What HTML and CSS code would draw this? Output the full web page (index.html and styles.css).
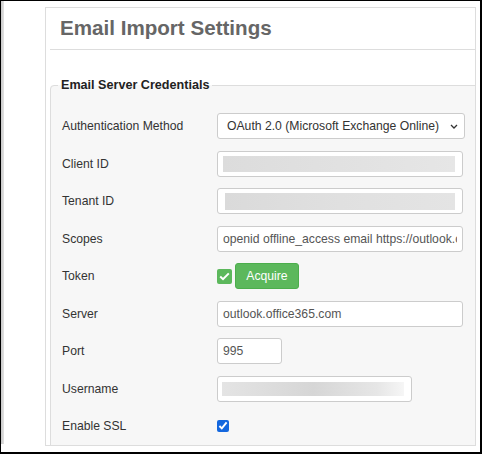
FILE: index.html
```html
<!DOCTYPE html>
<html>
<head>
    <meta charset="utf-8">
    <title>Email Import Settings</title>
    <link rel="stylesheet" href="styles.css">
</head>
<body>
    <div class="frame">
        <div class="edge"></div>

        <div class="panel">
            <div class="panel-head">
                <h2>Email Import Settings</h2>
            </div>

            <fieldset class="creds">
                <legend>Email Server Credentials</legend>

                <div class="form">
                    <label>Authentication Method</label>
                    <div class="field select">
                        <span>OAuth 2.0 (Microsoft Exchange Online)</span>
                        <svg width="8" height="5" viewBox="0 0 8 5">
                            <path d="M1 1 L4 4 L7 1" fill="none" stroke="#333" stroke-width="1.3"/>
                        </svg>
                    </div>

                    <label>Client ID</label>
                    <div class="field wide">
                        <span class="redact r1"></span>
                    </div>

                    <label>Tenant ID</label>
                    <div class="field wide">
                        <span class="redact r2"></span>
                    </div>

                    <label>Scopes</label>
                    <input class="field wide" type="text" value="openid offline_access email https://outlook.office.com/IMAP.AccessAsUser.All">

                    <label>Token</label>
                    <div class="token">
                        <span class="ok">
                            <svg width="11" height="9" viewBox="0 0 11 9">
                                <path d="M1.2 4.6 L4 7.2 L9.8 1.4" fill="none" stroke="#fff" stroke-width="2"/>
                            </svg>
                        </span>
                        <button class="btn">Acquire</button>
                    </div>

                    <label>Server</label>
                    <input class="field wide" type="text" value="outlook.office365.com">

                    <label>Port</label>
                    <input class="field port" type="text" value="995">

                    <label>Username</label>
                    <div class="field user">
                        <span class="redact r3"></span>
                    </div>

                    <label>Enable SSL</label>
                    <div class="ssl">
                        <input type="checkbox" checked>
                    </div>
                </div>
            </fieldset>
        </div>
    </div>
</body>
</html>
```

FILE: styles.css
```css
* {
    margin: 0;
    padding: 0;
    box-sizing: border-box;
}
body {
    background: #ffffff;
    font-family: "Liberation Sans", Arial, sans-serif;
    color: #333333;
}
.frame {
    width: 482px;
    height: 454px;
    border-style: solid;
    border-color: #000000;
    border-width: 1px 2px 2px 1px;
    display: flex;
    align-items: flex-start;
    overflow: hidden;
}
.edge {
    width: 3px;
    height: 443px;
    background: linear-gradient(to right, #c8c8c8, #e2e2e2);
}

.panel {
    width: 431px;
    height: 439px;
    margin-top: 6px;
    margin-left: 41px;
    border: 1px solid #dddddd;
    padding-left: 4px;
    overflow: hidden;
}
.panel-head {
    height: 42px;
    border-bottom: 1px solid #dddddd;
    padding: 8px 0 0 10px;
}
.panel-head h2 {
    font-size: 20.6px;
    line-height: 24px;
    font-weight: bold;
    color: #666666;
}

.creds {
    margin: 28px -20px 0 0;
    border: 1px solid #dddddd;
    border-radius: 4px;
    background: #f7f7f7;
    padding: 0 0 40px 7px;
    min-width: 0;
}
.creds legend {
    font-size: 12.6px;
    line-height: 15px;
    font-weight: bold;
    color: #222222;
    padding: 0 3px;
}

.form {
    display: grid;
    grid-template-columns: 155px 1fr;
    grid-auto-rows: 26px;
    row-gap: 11.5px;
    margin-top: 20px;
    padding-left: 4px;
    align-items: center;
}
.form label {
    font-size: 12.2px;
    color: #333333;
}

.field {
    height: 26px;
    border: 1px solid #cccccc;
    border-radius: 3px;
    background: #ffffff;
    font-family: "Liberation Sans", Arial, sans-serif;
    font-size: 12.2px;
    color: #555555;
    padding: 0 5px;
    outline: none;
}
.wide {
    width: 246px;
}
.port {
    width: 65px;
}
.user {
    width: 195px;
}
.select {
    width: 248px;
    display: flex;
    align-items: center;
    justify-content: space-between;
    padding: 0 6px 0 9px;
    color: #333333;
}
div.field {
    display: flex;
    align-items: center;
}
.redact {
    display: block;
    height: 16px;
}
.r1 {
    width: 232px;
    margin-left: 0;
    background: linear-gradient(to right, #dcdcdc, #e2e2e2 60%, #e6e6e6);
}
.r2 {
    width: 230px;
    margin-left: 2px;
    height: 17px;
    background: linear-gradient(to right, #dadada, #e0e0e0 50%, #e4e4e4);
}
.r3 {
    width: 182px;
    height: 14px;
    margin-left: -1px;
    background: linear-gradient(to right, #e4e4e4, #d6d6d6 50%, #e6e6e6 85%, #f6f6f6);
}

.token {
    display: flex;
    align-items: center;
    gap: 3px;
}
.ok {
    width: 15px;
    height: 15px;
    border-radius: 2px;
    background: #5cb85c;
    display: flex;
    align-items: center;
    justify-content: center;
}
.btn {
    width: 64px;
    height: 26px;
    border: 1px solid #4cae4c;
    border-radius: 3px;
    background: #5cb85c;
    color: #ffffff;
    font-family: "Liberation Sans", Arial, sans-serif;
    font-size: 12.2px;
}

.ssl {
    display: flex;
    align-items: center;
}
.ssl input {
    width: 12px;
    height: 12px;
    margin: 0;
    accent-color: #1467de;
}
```
